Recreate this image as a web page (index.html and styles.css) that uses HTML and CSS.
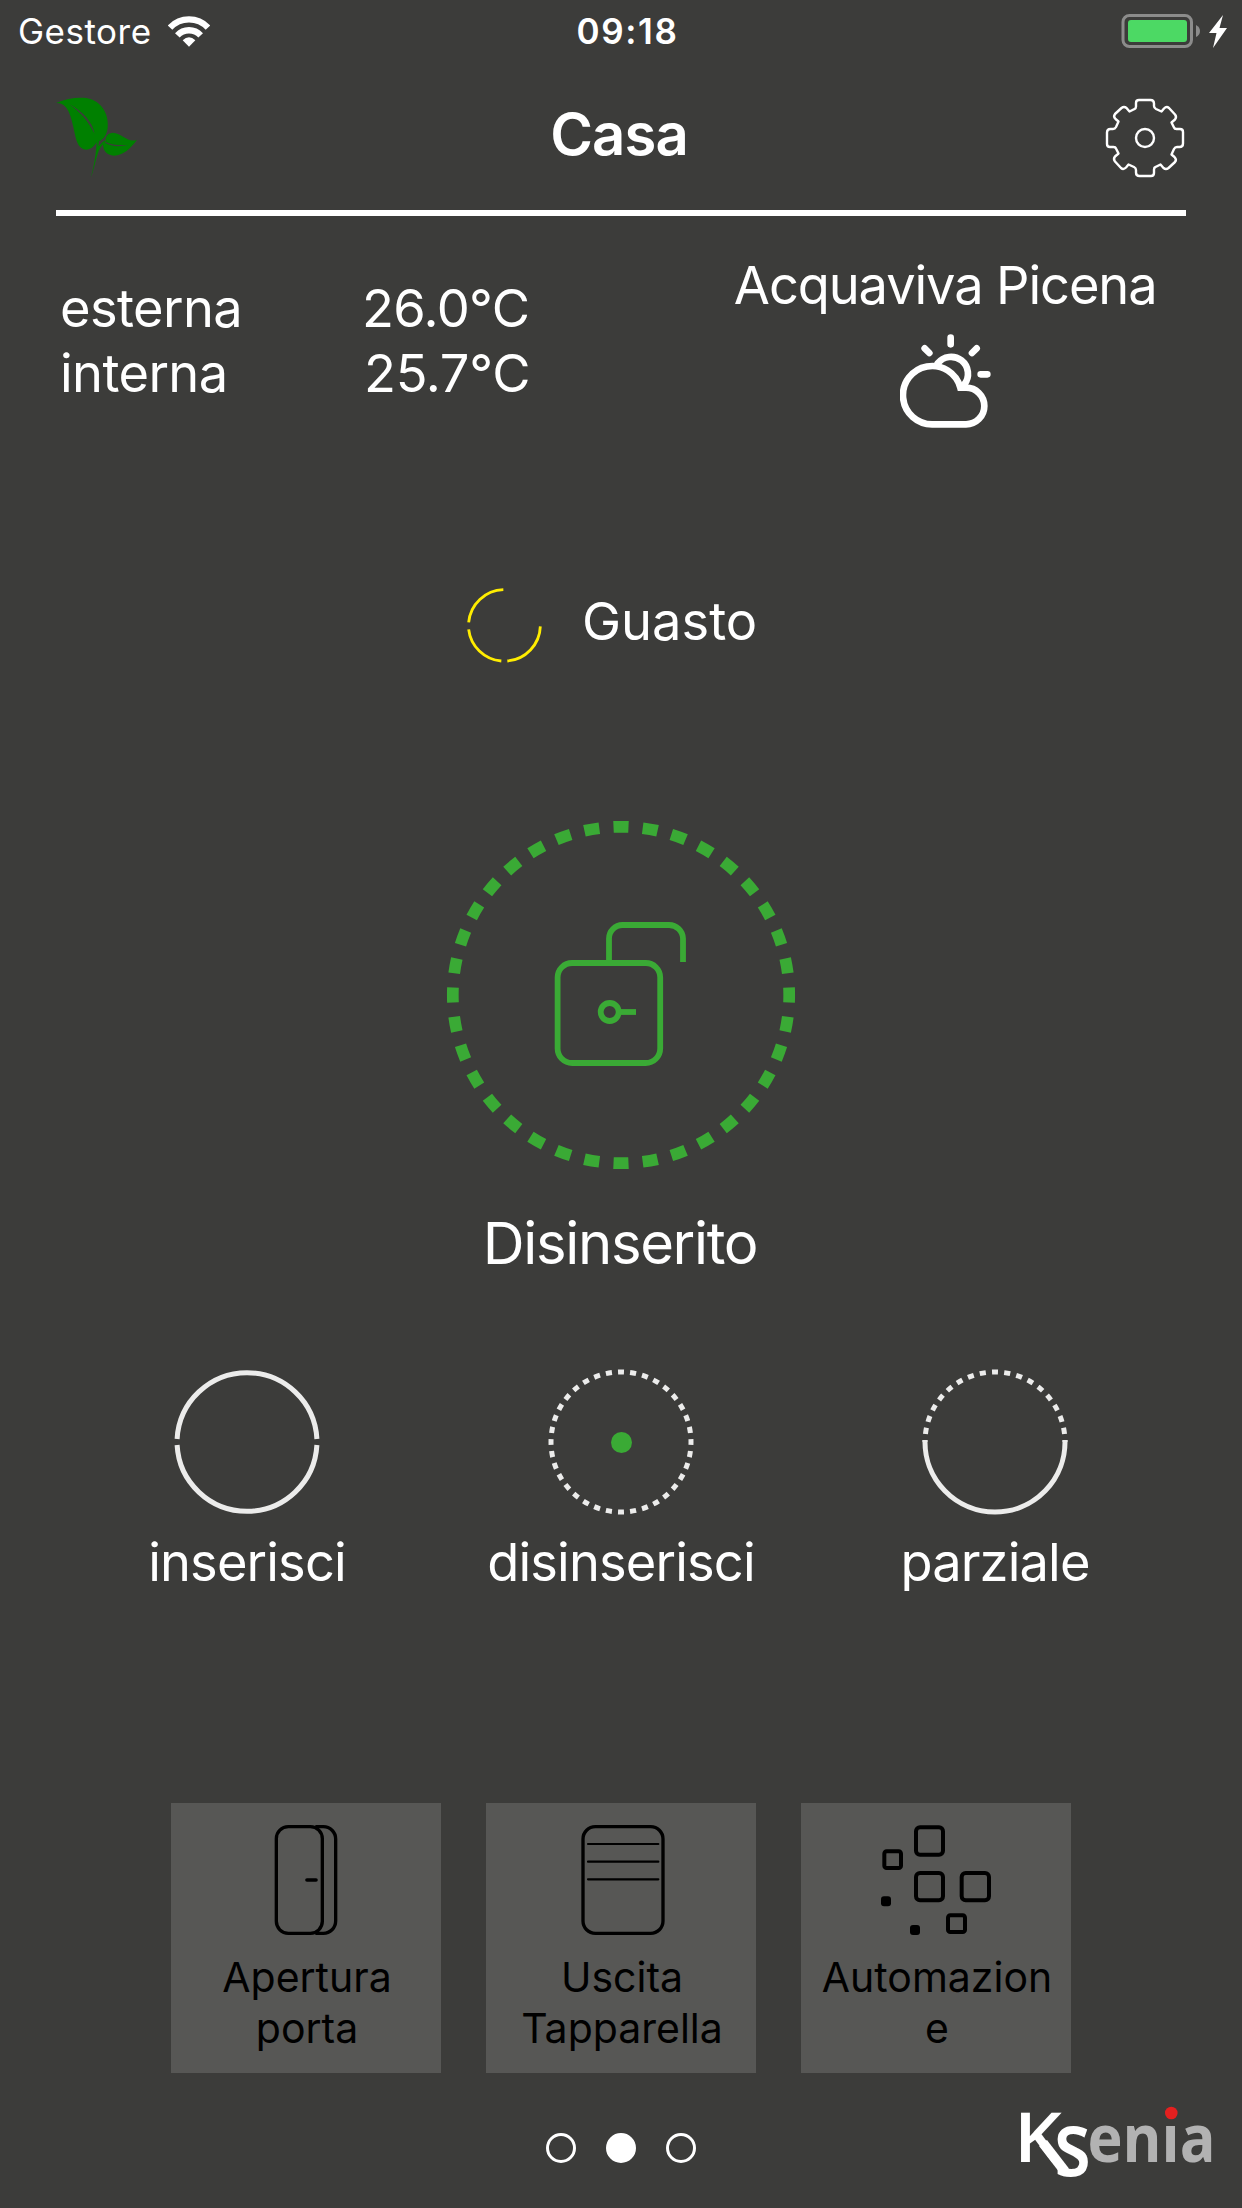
FILE: index.html
```html
<!DOCTYPE html>
<html lang="it">
<head>
<meta charset="utf-8">
<title>Casa</title>
<link rel="stylesheet" href="styles.css">
</head>
<body>
<div class="app">
  <div class="status">
    <div class="carrier">
      <span class="carrier-name">Gestore</span>
      <svg class="wifi" width="42" height="31" viewBox="504 43 126 93" fill="none" stroke="#fff" stroke-width="19">
        <path d="M510 78A78 78 0 0 1 624 78"/>
        <path d="M532 101A48 48 0 0 1 602 101"/>
        <path d="M567 135L548 116Q567 98 586 116Z" fill="#fff" stroke="none"/>
      </svg>
    </div>
    <span class="clock">09:18</span>
    <svg class="battery" width="106" height="36" viewBox="1121 12 106 36">
      <rect x="1123" y="14.5" width="68.5" height="31" rx="6.5" fill="none" stroke="#8c8c8b" stroke-width="3"/>
      <rect x="1128" y="19" width="59" height="22" rx="3" fill="#4cd964"/>
      <path d="M1196 24Q1200 26 1200 30T1196 36Z" fill="#8c8c8b"/>
      <path d="M1223 14L1209 32H1216.5L1213 47L1227 27H1219.5Z" fill="#fff"/>
    </svg>
  </div>

  <header class="header">
    <svg class="leaf" width="81" height="81" viewBox="168 292 243 243" fill="#008000">
      <path d="M168 310C195 298 222 293 250 294C300 296 328 340 323 385C320 408 309 421 297 424L295 437L290 428C283 440 273 450 258 450C232 448 228 420 220 382C212 345 202 308 168 310Z"/>
      <path d="M207 313C250 335 278 370 284 402C262 362 242 337 207 313Z" fill="#3c3c3a"/>
      <path d="M290 426C288 465 281 505 272 534C287 500 288 455 309 434L317 425L314 422L295 440V420Z"/>
      <path d="M411 420C385 432 368 401 338 399C321 401 314 414 318 425L309 431C308 452 320 467 342 468C370 467 392 446 411 420Z"/>
      <path d="M316 426C335 436 355 437 384 436C355 442 333 440 316 430Z" fill="#3c3c3a"/>
    </svg>
    <h1 class="title">Casa</h1>
    <svg class="gear" width="80" height="80" viewBox="-40 -40 80 80" fill="none" stroke="#fff" stroke-width="2.4" stroke-linejoin="round">
      <defs><path id="tooth" d="M-6 -38H5.500Q9 -38 9 -34.500V-32Q9 -30 11 -29L16.500 -26.500L19 -29.500Q21.500 -32 24 -30L30 -23.500Q32 -21 30 -18.500L26.500 -15.500L29 -10.500Q29.500 -9 31.500 -9H35Q38 -9 38 -6"/></defs>
      <use href="#tooth"/>
      <use href="#tooth" transform="rotate(90)"/>
      <use href="#tooth" transform="rotate(180)"/>
      <use href="#tooth" transform="rotate(270)"/>
      <circle r="9"/>
    </svg>
  </header>

  <section class="climate">
    <dl class="temps">
      <dt>esterna</dt><dd>26.0°C</dd>
      <dt>interna</dt><dd class="inside">25.7°C</dd>
    </dl>
    <div class="weather">
      <span class="place">Acquaviva Picena</span>
      <svg width="91" height="94" viewBox="597 280 273 282" fill="none" stroke="#fff" stroke-width="20" stroke-linecap="round">
        <path d="M695 551H795A55 55 0 0 0 795 441H778A87.500 87.500 0 1 0 695 551Z"/>
        <path d="M710 368A50 50 0 1 1 790 431"/>
        <path d="M749 291V311M671 323L685 337M827 323L813 337M839 401H859"/>
      </svg>
    </div>
  </section>

  <section class="fault">
    <svg width="75" height="75" viewBox="80 53 225 225" fill="none" stroke="#ffed00" stroke-width="8.500">
      <path d="M85 156A108 108 0 0 1 189 58M183 272A108 108 0 0 1 85 177M300 168A108 108 0 0 1 201 272"/>
    </svg>
    <span class="fault-text">Guasto</span>
  </section>

  <section class="state">
    <svg width="350" height="350" viewBox="446 820 350 350" fill="none" stroke="#3aaa35" stroke-width="5.800">
      <circle cx="621" cy="995" r="168.200" stroke-width="11.700" pathLength="720" stroke-dasharray="10.300 9.700" stroke-dashoffset="5.150"/>
      <rect x="557.600" y="963" width="102.600" height="100" rx="14.500"/>
      <path d="M609 961V938.500A13.500 13.500 0 0 1 622.500 925H669A14 14 0 0 1 683 938.500V962"/>
      <circle cx="609.700" cy="1012" r="9"/>
      <path d="M619 1012H636"/>
    </svg>
    <span class="state-text">Disinserito</span>
  </section>

  <section class="actions">
    <div class="action">
      <svg width="146" height="146" viewBox="-73 -73 146 146" fill="none" stroke="#ececeb" stroke-width="5">
        <path d="M-69.900 -3A70 70 0 0 1 69.900 -3M-69.900 3A70 70 0 0 0 69.900 3"/>
      </svg>
      <span>inserisci</span>
    </div>
    <div class="action">
      <svg width="146" height="146" viewBox="-73 -73 146 146" fill="none" stroke="#ececeb" stroke-width="5">
        <circle r="70" pathLength="360" stroke-dasharray="5 5" stroke-dashoffset="2.500"/>
        <circle cx=".5" cy=".5" r="10.500" fill="#3aaa35" stroke="none"/>
      </svg>
      <span>disinserisci</span>
    </div>
    <div class="action">
      <svg width="146" height="146" viewBox="-73 -73 146 146" fill="none" stroke="#ececeb" stroke-width="5">
        <path d="M-70 0A70 70 0 0 1 70 0" pathLength="180" stroke-dasharray="5 5.100" stroke-dashoffset="-6.700"/>
        <path d="M-69.970 -2A70 70 0 1 0 69.970 -2"/>
      </svg>
      <span>parziale</span>
    </div>
  </section>

  <section class="tiles">
    <div class="tile">
      <svg width="64" height="110" viewBox="342 105 192 330" fill="none" stroke="#000" stroke-width="10">
        <rect x="349" y="110" width="138" height="320" rx="36"/>
        <path d="M466 110H490A37 37 0 0 1 527 147V393A37 37 0 0 1 490 430H466"/>
        <path d="M441 270H468" stroke-width="11" stroke-linecap="round"/>
      </svg>
      <span>Apertura porta</span>
    </div>
    <div class="tile">
      <svg class="shutter" width="84" height="110" viewBox="-1 0 252 330" fill="none" stroke="#000" stroke-width="10">
        <rect x="5" y="5" width="240" height="320" rx="37"/>
        <path d="M20 57H231M20 110H231M20 163H231" stroke-width="6.500" stroke-linecap="round"/>
      </svg>
      <span>Uscita Tapparella</span>
    </div>
    <div class="tile">
      <svg width="110" height="110" viewBox="783 105 330 330" fill="none" stroke="#000" stroke-width="12">
        <rect x="888" y="112" width="81" height="82" rx="12"/>
        <rect x="888" y="249" width="81" height="82" rx="12"/>
        <rect x="1025" y="249" width="82" height="82" rx="12"/>
        <rect x="793" y="184" width="50" height="50" rx="7"/>
        <rect x="984" y="376" width="51" height="50" rx="7"/>
        <rect x="783" y="319" width="30" height="30" rx="9" fill="#000" stroke="none"/>
        <rect x="870" y="405" width="30" height="30" rx="9" fill="#000" stroke="none"/>
      </svg>
      <span>Automazione</span>
    </div>
  </section>

  <footer class="footer">
    <div class="pager"><i class="dot"></i><i class="dot current"></i><i class="dot"></i></div>
    <svg class="brand" width="232" height="135" viewBox="1010 2073 232 135">
      <path d="M1043 2143L1065 2171.500" fill="none" stroke="#fff" stroke-width="10"/>
      <text><tspan class="brand-k" x="1014" y="2162" textLength="48" lengthAdjust="spacingAndGlyphs">K</tspan><tspan class="brand-s" x="1054" y="2175.500" textLength="37" lengthAdjust="spacingAndGlyphs">s</tspan><tspan class="brand-rest" x="1087.500" y="2162" textLength="128" lengthAdjust="spacingAndGlyphs">enia</tspan></text>
      <rect x="1163" y="2102" width="17" height="22" fill="#3c3c3a"/>
      <circle cx="1171.300" cy="2113" r="6.300" fill="#e4201f"/>
    </svg>
  </footer>
</div>
</body>
</html>
```
FILE: styles.css
```css
* {
  box-sizing: border-box;
}

body {
  margin: 0;
  background: #3c3c3a;
  color: #fff;
  font-family: Inter, "Liberation Sans", sans-serif;
}

svg {
  display: block;
  flex: none;
}

.app {
  width: 1242px;
  height: 2208px;
  display: flex;
  flex-direction: column;
  overflow: hidden;
}

/* Status bar */
.status {
  height: 62px;
  padding: 0 15px 0 18px;
  display: grid;
  grid-template-columns: 1fr auto 1fr;
  align-items: center;
}

.carrier {
  display: flex;
  align-items: center;
}

.carrier-name {
  width: 150px;
  font-size: 35px;
  line-height: 62px;
  letter-spacing: 0.5px;
}

.clock {
  padding-left: 10px;
  font-size: 35px;
  font-weight: 600;
  line-height: 62px;
  letter-spacing: 1.600px;
}

.battery {
  justify-self: end;
}

/* Title bar */
.header {
  height: 154px;
  margin: 0 56px;
  padding-top: 2px;
  border-bottom: 6px solid #fff;
  display: grid;
  grid-template-columns: 1fr auto 1fr;
  align-items: center;
}

.title {
  margin: 0 4px 6px 0;
  font-size: 58px;
  font-weight: 600;
  line-height: 70px;
  letter-spacing: -0.900px;
}

.gear {
  justify-self: end;
  margin: 1px 1px 0 0;
}

/* Temperatures and weather */
.climate {
  height: 334px;
  display: flex;
  justify-content: space-between;
  padding: 37px 85.500px 0 60px;
  font-size: 52.400px;
  line-height: 65px;
  letter-spacing: -0.600px;
}

.temps {
  margin: 23px 0 0;
  width: 470px;
  display: grid;
  grid-template-columns: 302px auto;
  grid-auto-rows: 65px;
  justify-content: start;
}

.temps dd {
  margin: 0;
}

.temps .inside {
  padding-left: 2px;
  letter-spacing: -0.300px;
}

.weather {
  display: flex;
  flex-direction: column;
  align-items: center;
  gap: 16px;
  white-space: nowrap;
}

.place {
  letter-spacing: -1.100px;
}

/* Fault notice */
.fault {
  height: 150px;
  padding-left: 466.500px;
  display: flex;
  align-items: center;
  gap: 40.500px;
}

.fault-text {
  margin-bottom: 8px;
  font-size: 52.400px;
  line-height: 65px;
}

/* Alarm state */
.state {
  height: 669px;
  padding-top: 120px;
  display: flex;
  flex-direction: column;
  align-items: center;
}

.state-text {
  margin: 38px 2px 0 0;
  font-size: 58px;
  line-height: 70px;
  letter-spacing: -1.350px;
}

/* Arm and disarm buttons */
.actions {
  height: 434px;
  margin: 0 60px;
  display: grid;
  grid-template-columns: repeat(3, 374px);
}

.action {
  display: flex;
  flex-direction: column;
  align-items: center;
  gap: 15px;
  font-size: 52.400px;
  line-height: 65px;
  letter-spacing: -0.850px;
}

/* Scenario tiles */
.tiles {
  display: flex;
  justify-content: center;
  gap: 45px;
}

.tile {
  width: 270px;
  height: 270px;
  padding: 22px 14px 0;
  display: flex;
  flex-direction: column;
  align-items: center;
  gap: 17px;
  background: #575755;
  color: #000;
  font-size: 41px;
  line-height: 51px;
  text-align: center;
}

.tile span {
  max-width: 240px;
  margin-left: 2px;
  overflow-wrap: anywhere;
}

.shutter {
  margin-left: 4px;
}

/* Page indicator and logo */
.footer {
  flex: 1;
  display: grid;
  grid-template-columns: 1fr auto 1fr;
}

.pager {
  grid-column: 2;
  height: 84px;
  margin-top: 33px;
  display: flex;
  align-items: center;
  gap: 30px;
}

.dot {
  width: 30px;
  height: 30px;
  border: 3px solid #fff;
  border-radius: 50%;
}

.current {
  background: #fff;
}

.brand {
  justify-self: end;
  font-family: "Open Sans", "Noto Sans", sans-serif;
  font-weight: 700;
}

.brand-k {
  fill: #fff;
  font-size: 69px;
  font-weight: 600;
}

.brand-s {
  fill: #fff;
  font-size: 91px;
  font-weight: 600;
}

.brand-rest {
  fill: #b2b2b2;
  font-size: 67px;
}
```
